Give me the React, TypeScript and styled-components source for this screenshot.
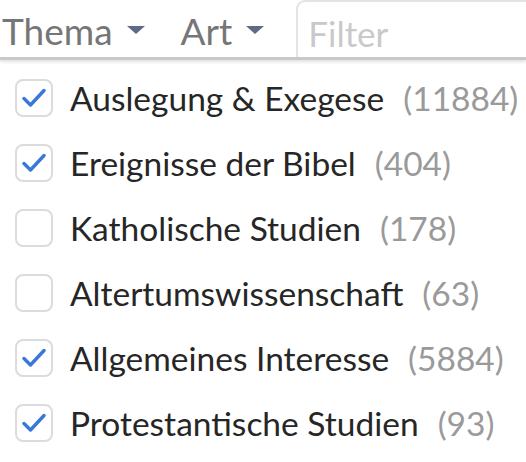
import React from "react";
import styled, { createGlobalStyle } from "styled-components";

const Global = createGlobalStyle`
  html, body { margin: 0; padding: 0; background: #fff; }
  body { font-family: Lato, "Open Sans", sans-serif; overflow: hidden; }
`;

const Page = styled.div`
  width: 526px;
  height: 462px;
  display: flex;
  flex-direction: column;
`;

const Header = styled.div`
  height: 57px;
  display: flex;
  align-items: stretch;
  border-bottom: 3px solid #c9c9c9;
  box-shadow: 0 2px 3px rgba(0, 0, 0, 0.12);
  box-sizing: content-box;
`;

const Dropdown = styled.div<{ $ml: number }>`
  display: flex;
  align-items: center;
  margin-left: ${(p) => p.$ml}px;
  gap: 14px;
  color: #767676;
  font-size: 37px;
  padding-top: 4px;
`;

const Caret = styled.span`
  width: 0;
  height: 0;
  border-left: 9px solid transparent;
  border-right: 9px solid transparent;
  border-top: 8px solid #5e6b84;
  margin-top: -2px;
`;

const FilterBox = styled.div`
  margin-left: 32px;
  flex: 1;
  border: 2px solid #e3e3e3;
  border-right: none;
  border-bottom: none;
  border-top-left-radius: 9px;
  display: flex;
  align-items: center;
  padding-left: 10px;
  padding-top: 6px;
  font-size: 35px;
  color: #c9c9c9;
`;

const List = styled.div`
  display: flex;
  flex-direction: column;
  padding: 19px 0 0 15px;
  gap: 27px;
`;

const Row = styled.div`
  display: flex;
  align-items: center;
  height: 38px;
`;

const Box = styled.span`
  width: 34px;
  height: 34px;
  border: 2px solid #dcdcdc;
  border-radius: 8px;
  display: flex;
  align-items: center;
  justify-content: center;
  flex-shrink: 0;
`;

const Label = styled.span`
  margin-left: 17px;
  font-size: 33.5px;
  color: #262626;
  white-space: nowrap;
`;

const Count = styled.span`
  margin-left: 19px;
  font-size: 33.5px;
  color: #9a9a9a;
`;

const Check = () => (
  <svg width="24" height="20" viewBox="0 0 24 20">
    <path d="M2 10.5 L8.5 17 L22 2.5" fill="none" stroke="#3a78d8" strokeWidth="3.4" strokeLinecap="round" strokeLinejoin="round" />
  </svg>
);

const items = [
  { label: "Auslegung & Exegese", count: 11884, checked: true },
  { label: "Ereignisse der Bibel", count: 404, checked: true },
  { label: "Katholische Studien", count: 178, checked: false },
  { label: "Altertumswissenschaft", count: 63, checked: false },
  { label: "Allgemeines Interesse", count: 5884, checked: true },
  { label: "Protestantische Studien", count: 93, checked: true },
];

export default function App() {
  return (
    <Page>
      <Global />
      <Header>
        <Dropdown $ml={2}>
          Thema <Caret />
        </Dropdown>
        <Dropdown $ml={36}>
          Art <Caret />
        </Dropdown>
        <FilterBox>Filter</FilterBox>
      </Header>
      <List>
        {items.map((it) => (
          <Row key={it.label}>
            <Box>{it.checked && <Check />}</Box>
            <Label>{it.label}</Label>
            <Count>({it.count})</Count>
          </Row>
        ))}
      </List>
    </Page>
  );
}
